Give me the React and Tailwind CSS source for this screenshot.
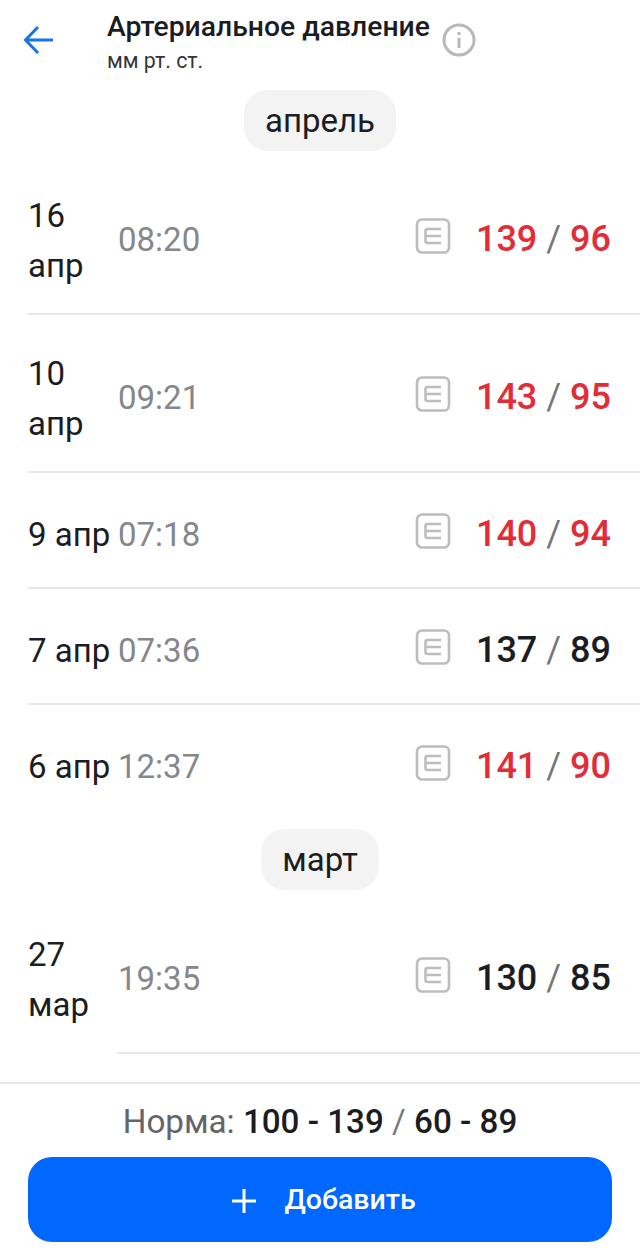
import React from "react";

const NoteIcon = () => (
  <svg width="36" height="36" viewBox="0 0 36 36" fill="none" stroke="#bdbdbd" strokeWidth="2.6" className="shrink-0">
    <rect x="2" y="1.5" width="32" height="33" rx="5" />
    <path d="M26 11H12.5a2 2 0 0 0-2 2v10a2 2 0 0 0 2 2H26M10.5 18H26" />
  </svg>
);

const Row = ({ date, time, sys, dia, high, tall, inset }) => (
  <div className={`flex items-center ${tall ? "h-[158px]" : "h-[116px]"} pl-7 pr-[29px] relative`}>
    <div className={`w-[90px] text-[33px] leading-[50px] text-[#1b1d22] shrink-0 ${tall ? "mt-[10px]" : "mt-[7px]"}`}>{date}</div>
    <div className="text-[33px] text-[#85878b] mt-[7px]">{time}</div>
    <div className="ml-auto flex items-center">
      <NoteIcon />
      <div className={`ml-[24px] mt-[5px] w-[136px] text-[36px] font-medium whitespace-nowrap text-right ${high ? "text-[#e22c38]" : "text-[#1b1d22]"}`}>
        {sys} <span className="text-[#75777b] font-normal">/</span> {dia}
      </div>
    </div>
    {inset !== null && (
      <div className={`absolute bottom-0 right-0 h-[2px] bg-[#e8e8e8] ${inset ? "left-[117px]" : "left-7"}`} />
    )}
  </div>
);

const Pill = ({ children }) => (
  <div className="flex justify-center">
    <div className="h-[61px] px-[21px] rounded-[24px] bg-[#f3f3f3] text-[33px] leading-[61px] text-[#1b1d22]">{children}</div>
  </div>
);

export default function App() {
  return (
    <div className="w-[640px] h-[1253px] bg-white flex flex-col overflow-hidden" style={{ fontFamily: "Roboto, sans-serif" }}>
      {/* Header */}
      <div className="h-[90px] shrink-0 flex items-start">
        <svg width="32" height="32" viewBox="0 0 32 32" fill="none" stroke="#1a73e8" strokeWidth="3" className="ml-[23px] mt-[24px] shrink-0">
          <path d="M30 16H3M15 3 2.5 16 15 29" />
        </svg>
        <div className="ml-[52px] mt-[10px]">
          <div className="text-[28.3px] leading-[34px] font-medium text-[#1b1d22] whitespace-nowrap">Артериальное давление</div>
          <div className="text-[21.3px] leading-[34px] text-[#33353a]">мм рт. ст.</div>
        </div>
        <svg width="34" height="34" viewBox="0 0 34 34" fill="none" stroke="#b8b8b8" strokeWidth="3" className="ml-[12px] mt-[23px] shrink-0">
          <circle cx="17" cy="17" r="15" />
          <path d="M17 15v10M17 9v3" />
        </svg>
      </div>

      {/* List */}
      <div className="flex-1 overflow-hidden">
        <Pill>апрель</Pill>
        <div className="h-[6px]" />
        <Row date="16 апр" time="08:20" sys="139" dia="96" high tall />
        <Row date="10 апр" time="09:21" sys="143" dia="95" high tall />
        <Row date="9 апр" time="07:18" sys="140" dia="94" high />
        <Row date="7 апр" time="07:36" sys="137" dia="89" />
        <Row date="6 апр" time="12:37" sys="141" dia="90" high inset={null} />
        <div className="h-[8px]" />
        <Pill>март</Pill>
        <div className="h-[6px]" />
        <Row date="27 мар" time="19:35" sys="130" dia="85" tall inset />
      </div>

      {/* Footer */}
      <div className="h-[171px] shrink-0 border-t-2 border-[#e8e8e8] px-7">
        <div className="h-[73px] pt-[2px] flex items-center justify-center text-[33.2px] text-[#63656a] whitespace-nowrap">
          Норма:&nbsp;
          <span className="font-medium text-[#1b1d22]">100 - 139 <span className="font-normal text-[#75777b]">/</span> 60 - 89</span>
        </div>
        <button className="w-full h-[85px] pl-[7px] pt-[2px] rounded-[24px] bg-[#0068ff] flex items-center justify-center text-white text-[28.5px] font-medium">
          <svg width="26" height="26" viewBox="0 0 26 26" stroke="#fff" strokeWidth="3" className="mr-[27px]">
            <path d="M13 1v24M1 13h24" />
          </svg>
          Добавить
        </button>
      </div>
    </div>
  );
}
